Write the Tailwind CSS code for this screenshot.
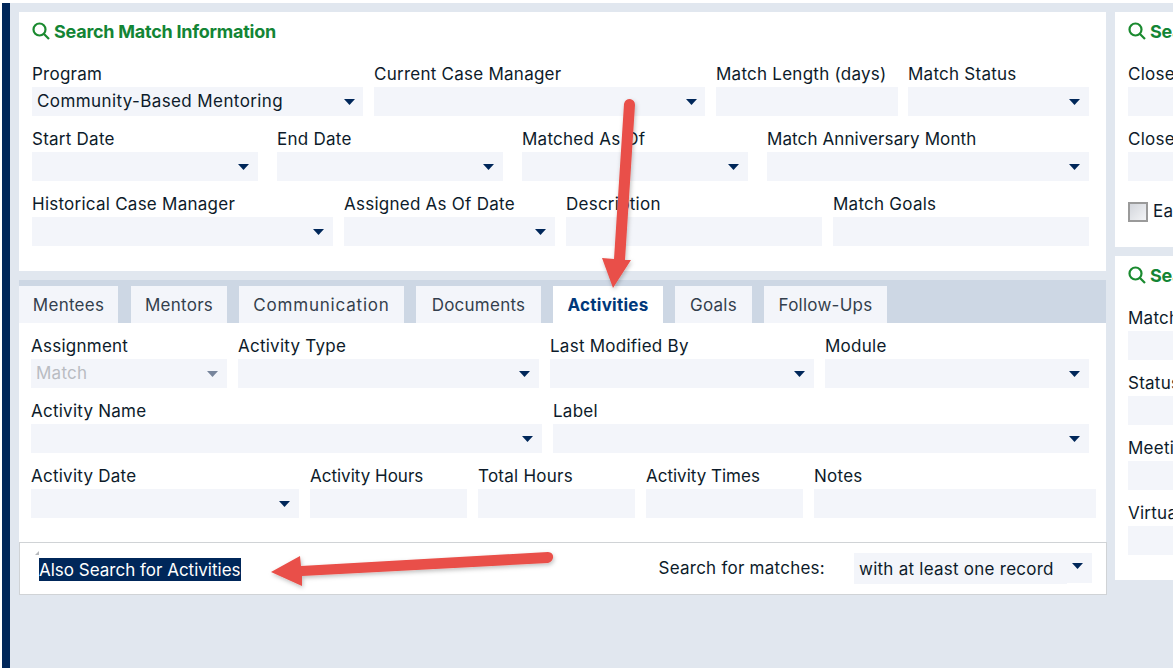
<!DOCTYPE html>
<html><head><meta charset="utf-8"><script src="https://cdn.jsdelivr.net/npm/@tailwindcss/browser@4"></script></head>
<body class="m-0">
<div class="relative flex w-[1173px] h-[668px] overflow-hidden bg-[#e1e7ef] font-['Inter',sans-serif] text-[17px] tracking-[0.25px] text-[#0d1b2a]">
  <div class="w-[2px] shrink-0 bg-white"></div>
  <div class="w-[8px] shrink-0 bg-[#00275a]"></div>
  <div class="flex-1 min-w-0 flex flex-col">
    <div class="h-[3px] bg-white shrink-0 -ml-[8px]"></div>
    <div class="flex gap-[9px] pl-[9px] pt-[9px]">
      <!-- left column -->
      <div class="w-[1087px] shrink-0 flex flex-col">
        <section class="h-[259px] bg-white pl-[13px] pt-[7px] pr-[17px]">
          <h2 class="flex items-center gap-[4px] h-[24px] font-bold text-[#138535] text-[18px] tracking-[-0.25px]">
            <svg class="w-[18px] h-[18px]" viewBox="0 0 18 18" fill="none" stroke="#1a8a2f" stroke-width="2.2"><circle cx="7.5" cy="7.5" r="6"/><path d="M12 12l5 5"/></svg>
            Search Match Information
          </h2>
          <div class="mt-[20px] flex flex-col gap-[12px]">
            <div class="flex gap-[11px]">
              <div class="w-[331px]"><div class="h-[21px] mb-[3px] leading-[22px]">Program</div><div class="flex items-center justify-between h-[29px] bg-[#f3f5fa] pl-[5px] pr-[8px]"><span class="mt-[1px] tracking-[0.4px]">Community-Based Mentoring</span><svg class="w-[11px] h-[6px]" viewBox="0 0 11 6"><path d="M0 0h11L5.5 6z" fill="#00275a"/></svg></div></div>
              <div class="w-[331px]"><div class="h-[21px] mb-[3px] leading-[22px]">Current Case Manager</div><div class="flex items-center justify-end h-[29px] bg-[#f3f5fa] pr-[8px]"><svg class="w-[11px] h-[6px]" viewBox="0 0 11 6"><path d="M0 0h11L5.5 6z" fill="#00275a"/></svg></div></div>
              <div class="w-[182px]"><div class="h-[21px] mb-[3px] leading-[22px]">Match Length (days)</div><div class="h-[29px] bg-[#f3f5fa]"></div></div>
              <div class="w-[181px] ml-[-1px]"><div class="h-[21px] mb-[3px] leading-[22px]">Match Status</div><div class="flex items-center justify-end h-[29px] bg-[#f3f5fa] pr-[9px]"><svg class="w-[11px] h-[6px]" viewBox="0 0 11 6"><path d="M0 0h11L5.5 6z" fill="#00275a"/></svg></div></div>
            </div>
            <div class="flex gap-[19px]">
              <div class="w-[226px]"><div class="h-[21px] mb-[3px] leading-[22px]">Start Date</div><div class="flex items-center justify-end h-[29px] bg-[#f3f5fa] pr-[9px]"><svg class="w-[11px] h-[6px]" viewBox="0 0 11 6"><path d="M0 0h11L5.5 6z" fill="#00275a"/></svg></div></div>
              <div class="w-[226px]"><div class="h-[21px] mb-[3px] leading-[22px]">End Date</div><div class="flex items-center justify-end h-[29px] bg-[#f3f5fa] pr-[9px]"><svg class="w-[11px] h-[6px]" viewBox="0 0 11 6"><path d="M0 0h11L5.5 6z" fill="#00275a"/></svg></div></div>
              <div class="w-[226px]"><div class="h-[21px] mb-[3px] leading-[22px]">Matched As Of</div><div class="flex items-center justify-end h-[29px] bg-[#f3f5fa] pr-[9px]"><svg class="w-[11px] h-[6px]" viewBox="0 0 11 6"><path d="M0 0h11L5.5 6z" fill="#00275a"/></svg></div></div>
              <div class="w-[322px]"><div class="h-[21px] mb-[3px] leading-[22px] tracking-[0.1px]">Match Anniversary Month</div><div class="flex items-center justify-end h-[29px] bg-[#f3f5fa] pr-[9px]"><svg class="w-[11px] h-[6px]" viewBox="0 0 11 6"><path d="M0 0h11L5.5 6z" fill="#00275a"/></svg></div></div>
            </div>
            <div class="flex gap-[11px]">
              <div class="w-[301px]"><div class="h-[21px] mb-[3px] leading-[22px]">Historical Case Manager</div><div class="flex items-center justify-end h-[29px] bg-[#f3f5fa] pr-[9px]"><svg class="w-[11px] h-[6px]" viewBox="0 0 11 6"><path d="M0 0h11L5.5 6z" fill="#00275a"/></svg></div></div>
              <div class="w-[211px]"><div class="h-[21px] mb-[3px] leading-[22px]">Assigned As Of Date</div><div class="flex items-center justify-end h-[29px] bg-[#f3f5fa] pr-[9px]"><svg class="w-[11px] h-[6px]" viewBox="0 0 11 6"><path d="M0 0h11L5.5 6z" fill="#00275a"/></svg></div></div>
              <div class="w-[256px]"><div class="h-[21px] mb-[3px] leading-[22px]">Description</div><div class="h-[29px] bg-[#f3f5fa]"></div></div>
              <div class="w-[256px]"><div class="h-[21px] mb-[3px] leading-[22px]">Match Goals</div><div class="h-[29px] bg-[#f3f5fa]"></div></div>
            </div>
          </div>
        </section>
        <div class="h-[43px] mt-[9px] bg-[#cdd7e4] pt-[6px] flex items-stretch gap-[12px] text-[#333f4d] leading-[38px]">
          <div class="w-[99px] mr-[1px] bg-[#f3f5fa] text-center">Mentees</div>
          <div class="w-[96px] bg-[#f3f5fa] text-center">Mentors</div>
          <div class="w-[165px] bg-[#f3f5fa] text-center tracking-[0.8px]">Communication</div>
          <div class="w-[125px] bg-[#f3f5fa] text-center">Documents</div>
          <div class="w-[110px] bg-white text-center font-bold text-[#00387a]">Activities</div>
          <div class="w-[77px] bg-[#f3f5fa] text-center">Goals</div>
          <div class="w-[123px] bg-[#f3f5fa] text-center">Follow-Ups</div>
        </div>
        <section class="h-[219px] bg-white pl-[12px] pt-[12px] flex flex-col gap-[12px]">
          <div class="flex gap-[11px]">
            <div class="w-[196px]"><div class="h-[21px] mb-[3px] leading-[22px]">Assignment</div><div class="flex items-center justify-between h-[29px] bg-[#f3f5fa] pl-[5px] pr-[9px] text-[#b9bcc2]"><span class="mt-[1px]">Match</span><svg class="w-[11px] h-[6px]" viewBox="0 0 11 6"><path d="M0 0h11L5.5 6z" fill="#77859c"/></svg></div></div>
            <div class="w-[301px]"><div class="h-[21px] mb-[3px] leading-[22px]">Activity Type</div><div class="flex items-center justify-end h-[29px] bg-[#f3f5fa] pr-[9px]"><svg class="w-[11px] h-[6px]" viewBox="0 0 11 6"><path d="M0 0h11L5.5 6z" fill="#00275a"/></svg></div></div>
            <div class="w-[264px]"><div class="h-[21px] mb-[3px] leading-[22px]">Last Modified By</div><div class="flex items-center justify-end h-[29px] bg-[#f3f5fa] pr-[9px]"><svg class="w-[11px] h-[6px]" viewBox="0 0 11 6"><path d="M0 0h11L5.5 6z" fill="#00275a"/></svg></div></div>
            <div class="w-[264px]"><div class="h-[21px] mb-[3px] leading-[22px]">Module</div><div class="flex items-center justify-end h-[29px] bg-[#f3f5fa] pr-[9px]"><svg class="w-[11px] h-[6px]" viewBox="0 0 11 6"><path d="M0 0h11L5.5 6z" fill="#00275a"/></svg></div></div>
          </div>
          <div class="flex gap-[11px]">
            <div class="w-[511px]"><div class="h-[21px] mb-[3px] leading-[22px]">Activity Name</div><div class="flex items-center justify-end h-[29px] bg-[#f3f5fa] pr-[9px]"><svg class="w-[11px] h-[6px]" viewBox="0 0 11 6"><path d="M0 0h11L5.5 6z" fill="#00275a"/></svg></div></div>
            <div class="w-[536px]"><div class="h-[21px] mb-[3px] leading-[22px]">Label</div><div class="flex items-center justify-end h-[29px] bg-[#f3f5fa] pr-[9px]"><svg class="w-[11px] h-[6px]" viewBox="0 0 11 6"><path d="M0 0h11L5.5 6z" fill="#00275a"/></svg></div></div>
          </div>
          <div class="flex gap-[11px]">
            <div class="w-[268px]"><div class="h-[21px] mb-[3px] leading-[22px]">Activity Date</div><div class="flex items-center justify-end h-[29px] bg-[#f3f5fa] pr-[9px]"><svg class="w-[11px] h-[6px]" viewBox="0 0 11 6"><path d="M0 0h11L5.5 6z" fill="#00275a"/></svg></div></div>
            <div class="w-[157px]"><div class="h-[21px] mb-[3px] leading-[22px] tracking-normal">Activity Hours</div><div class="h-[29px] bg-[#f3f5fa]"></div></div>
            <div class="w-[157px]"><div class="h-[21px] mb-[3px] leading-[22px]">Total Hours</div><div class="h-[29px] bg-[#f3f5fa]"></div></div>
            <div class="w-[157px]"><div class="h-[21px] mb-[3px] leading-[22px] tracking-normal">Activity Times</div><div class="h-[29px] bg-[#f3f5fa]"></div></div>
            <div class="w-[282px]"><div class="h-[21px] mb-[3px] leading-[22px]">Notes</div><div class="h-[29px] bg-[#f3f5fa]"></div></div>
          </div>
        </section>
        <div class="relative w-[1088px] h-[53px] bg-white border border-[#d0d3d6] flex items-center">
          <span class="ml-[19px] h-[23px] mt-[1px] leading-[24px] tracking-normal bg-[#00275a] text-white">Also Search for Activities</span>
          <span class="absolute left-[15px] top-[8px] w-[4px] h-[4px] bg-[#b5b8bc] [clip-path:polygon(100%_0,100%_100%,0_100%)]"></span>
          <span class="ml-auto mr-[29px] mt-[1px]">Search for matches:</span>
          <div class="w-[238px] h-[31px] mr-[14px] flex items-start">
            <span class="w-[213px] h-[31px] bg-[#f3f5fa] pl-[5px] leading-[33px] whitespace-nowrap">with at least one record</span>
            <span class="flex-1 h-[30px] bg-[#f3f5fa] flex justify-end pr-[9px] pt-[10px]"><svg class="w-[11px] h-[6px]" viewBox="0 0 11 6"><path d="M0 0h11L5.5 6z" fill="#00275a"/></svg></span>
          </div>
        </div>
      </div>
      <!-- right column -->
      <div class="w-[300px] shrink-0 flex flex-col gap-[9px]">
        <section class="h-[235px] bg-white pl-[13px] pt-[7px]">
          <h2 class="flex items-center gap-[4px] h-[24px] font-bold text-[#138535] text-[18px] tracking-[-0.25px]"><svg class="w-[18px] h-[18px]" viewBox="0 0 18 18" fill="none" stroke="#1a8a2f" stroke-width="2.2"><circle cx="7.5" cy="7.5" r="6"/><path d="M12 12l5 5"/></svg>Search Closure Information</h2>
          <div class="mt-[20px] flex flex-col gap-[12px]">
            <div><div class="h-[21px] mb-[3px] leading-[22px]">Close Date</div><div class="h-[29px] bg-[#f3f5fa]"></div></div>
            <div><div class="h-[21px] mb-[3px] leading-[22px]">Close Reason</div><div class="h-[29px] bg-[#f3f5fa]"></div></div>
            <div class="flex items-center gap-[5px] mt-[6px]"><span class="w-[20px] h-[20px] border-2 border-[#9a9a9a] bg-gradient-to-br from-[#d3d6dc] to-[#f3f4f6]"></span><span>Early</span></div>
          </div>
        </section>
        <section class="h-[324px] bg-white pl-[13px] pt-[7px]">
          <h2 class="flex items-center gap-[4px] h-[24px] font-bold text-[#138535] text-[18px] tracking-[-0.25px]"><svg class="w-[18px] h-[18px]" viewBox="0 0 18 18" fill="none" stroke="#1a8a2f" stroke-width="2.2"><circle cx="7.5" cy="7.5" r="6"/><path d="M12 12l5 5"/></svg>Search Meeting Information</h2>
          <div class="mt-[20px] flex flex-col gap-[12px]">
            <div><div class="h-[21px] mb-[3px] leading-[22px]">Match</div><div class="h-[29px] bg-[#f3f5fa]"></div></div>
            <div><div class="h-[21px] mb-[3px] leading-[22px]">Status</div><div class="h-[29px] bg-[#f3f5fa]"></div></div>
            <div><div class="h-[21px] mb-[3px] leading-[22px]">Meeting</div><div class="h-[29px] bg-[#f3f5fa]"></div></div>
            <div><div class="h-[21px] mb-[3px] leading-[22px]">Virtual</div><div class="h-[29px] bg-[#f3f5fa]"></div></div>
          </div>
        </section>
      </div>
    </div>
  </div>
  <!-- annotation arrows -->
  <svg class="absolute left-0 top-0 w-[1173px] h-[668px] pointer-events-none" viewBox="0 0 1173 668">
    <defs><filter id="s" x="-20%" y="-20%" width="140%" height="140%"><feDropShadow dx="1" dy="2" stdDeviation="2" flood-color="#000" flood-opacity="0.25"/></filter></defs>
    <path filter="url(#s)" fill="#e94f48" d="M624 104Q625 99 630 99Q635 100 635 105L625 260L631 260L613 288L602 258L614 259Z"/>
    <path filter="url(#s)" fill="#e94f48" d="M271 572L300 556L301 566L548 552Q554 553 553 558Q552 562 548 563L302 576L302 586Z"/>
  </svg>
</div>
</body></html>
